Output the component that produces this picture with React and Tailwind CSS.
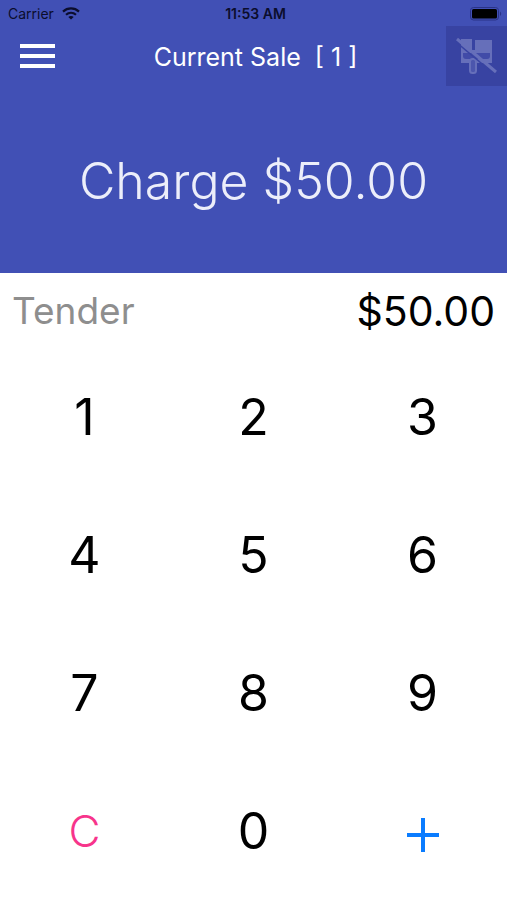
import React from "react";

const keys = ["1", "2", "3", "4", "5", "6", "7", "8", "9"];

function StatusBar() {
  return (
    <div className="grid h-[26px] grid-cols-3 items-center pl-2 pr-1 pt-px text-[14px] leading-4 text-[#0b0d2c]">
      <div className="flex items-center gap-2">
        <span>Carrier</span>
        <svg viewBox="0 0 18 13" className="h-[13px] w-[18px]" fill="none" stroke="currentColor" strokeWidth="2.2" aria-hidden="true">
          <path d="M1 4.6C5.6 0.4 12.4 0.4 17 4.6" />
          <path d="M4 7.8C6.9 5.2 11.1 5.2 14 7.8" />
          <path d="M6.3 9.9C7.8 8.6 10.2 8.6 11.7 9.9L9 12.6Z" fill="currentColor" stroke="none" />
        </svg>
      </div>
      <div className="text-center font-semibold">11:53 AM</div>
      <svg viewBox="0 0 33 14" className="h-[14px] w-[33px] justify-self-end" aria-hidden="true">
        <rect x="0.5" y="0.5" width="28" height="12.5" rx="3" fill="none" stroke="#2a3388" />
        <rect x="2" y="2" width="25" height="9.5" rx="1.5" fill="#000" />
        <path d="M30 4.5C31.6 5.2 31.6 8.3 30 9Z" fill="#2a3388" />
      </svg>
    </div>
  );
}

function NavBar() {
  return (
    <div className="grid h-[60px] grid-cols-[61px_1fr_61px] items-center">
      <button type="button" aria-label="Menu" className="flex h-full items-center pl-5">
        <svg viewBox="0 0 35 24" className="h-6 w-[35px]" fill="#fff" aria-hidden="true">
          <rect width="35" height="4" />
          <rect y="10" width="35" height="4" />
          <rect y="20" width="35" height="4" />
        </svg>
      </button>
      <h1 className="whitespace-pre pl-1 pt-px text-center text-[25px] leading-8 text-white">Current Sale  [ 1 ]</h1>
      <button type="button" aria-label="Reader disconnected" className="flex h-full items-center justify-center bg-[#3843a2]">
        <svg viewBox="0 0 42 38" className="h-[38px] w-[42px]" aria-hidden="true">
          <path d="M5 2H16V13H19V3H36V26H5Z" fill="#666fba" />
          <path d="M7 16H34V19Q34 22 31 22H10Q7 22 7 19Z" fill="#414ba8" />
          <rect x="14" y="22" width="6" height="14" rx="2.5" fill="#4c56ad" stroke="#666fba" strokeWidth="2" />
          <path d="M0 5L37 36" stroke="#3843a2" strokeWidth="1.5" />
          <path d="M1 2L40 35" stroke="#666fba" strokeWidth="3" />
        </svg>
      </button>
    </div>
  );
}

export default function App() {
  return (
    <main className="flex min-h-screen flex-col bg-white font-['Inter',sans-serif] text-black">
      <header className="bg-[#4150b5]">
        <StatusBar />
        <NavBar />
        <button type="button" className="flex h-[187px] w-full items-center justify-center pt-1 text-[50px] font-light text-[#eceefa]">
          Charge $50.00
        </button>
      </header>
      <div className="flex h-[75px] items-center justify-between px-3 leading-[48px]">
        <span className="text-[37px] text-[#8e8e8e]">Tender</span>
        <span className="text-[41px]">$50.00</span>
      </div>
      <div className="grid flex-1 grid-cols-3 grid-rows-4 text-[50px] leading-[60px]">
        {keys.map((k) => (
          <button key={k} type="button">{k}</button>
        ))}
        <button type="button" className="text-[44px] font-light text-[#f7348b]">C</button>
        <button type="button">0</button>
        <button type="button" aria-label="Add" className="flex items-center justify-center pt-2">
          <svg viewBox="0 0 32 34" className="h-[34px] w-8" stroke="#0a7cff" strokeWidth="4" aria-hidden="true">
            <path d="M0 17H32M16 0V34" />
          </svg>
        </button>
      </div>
    </main>
  );
}
